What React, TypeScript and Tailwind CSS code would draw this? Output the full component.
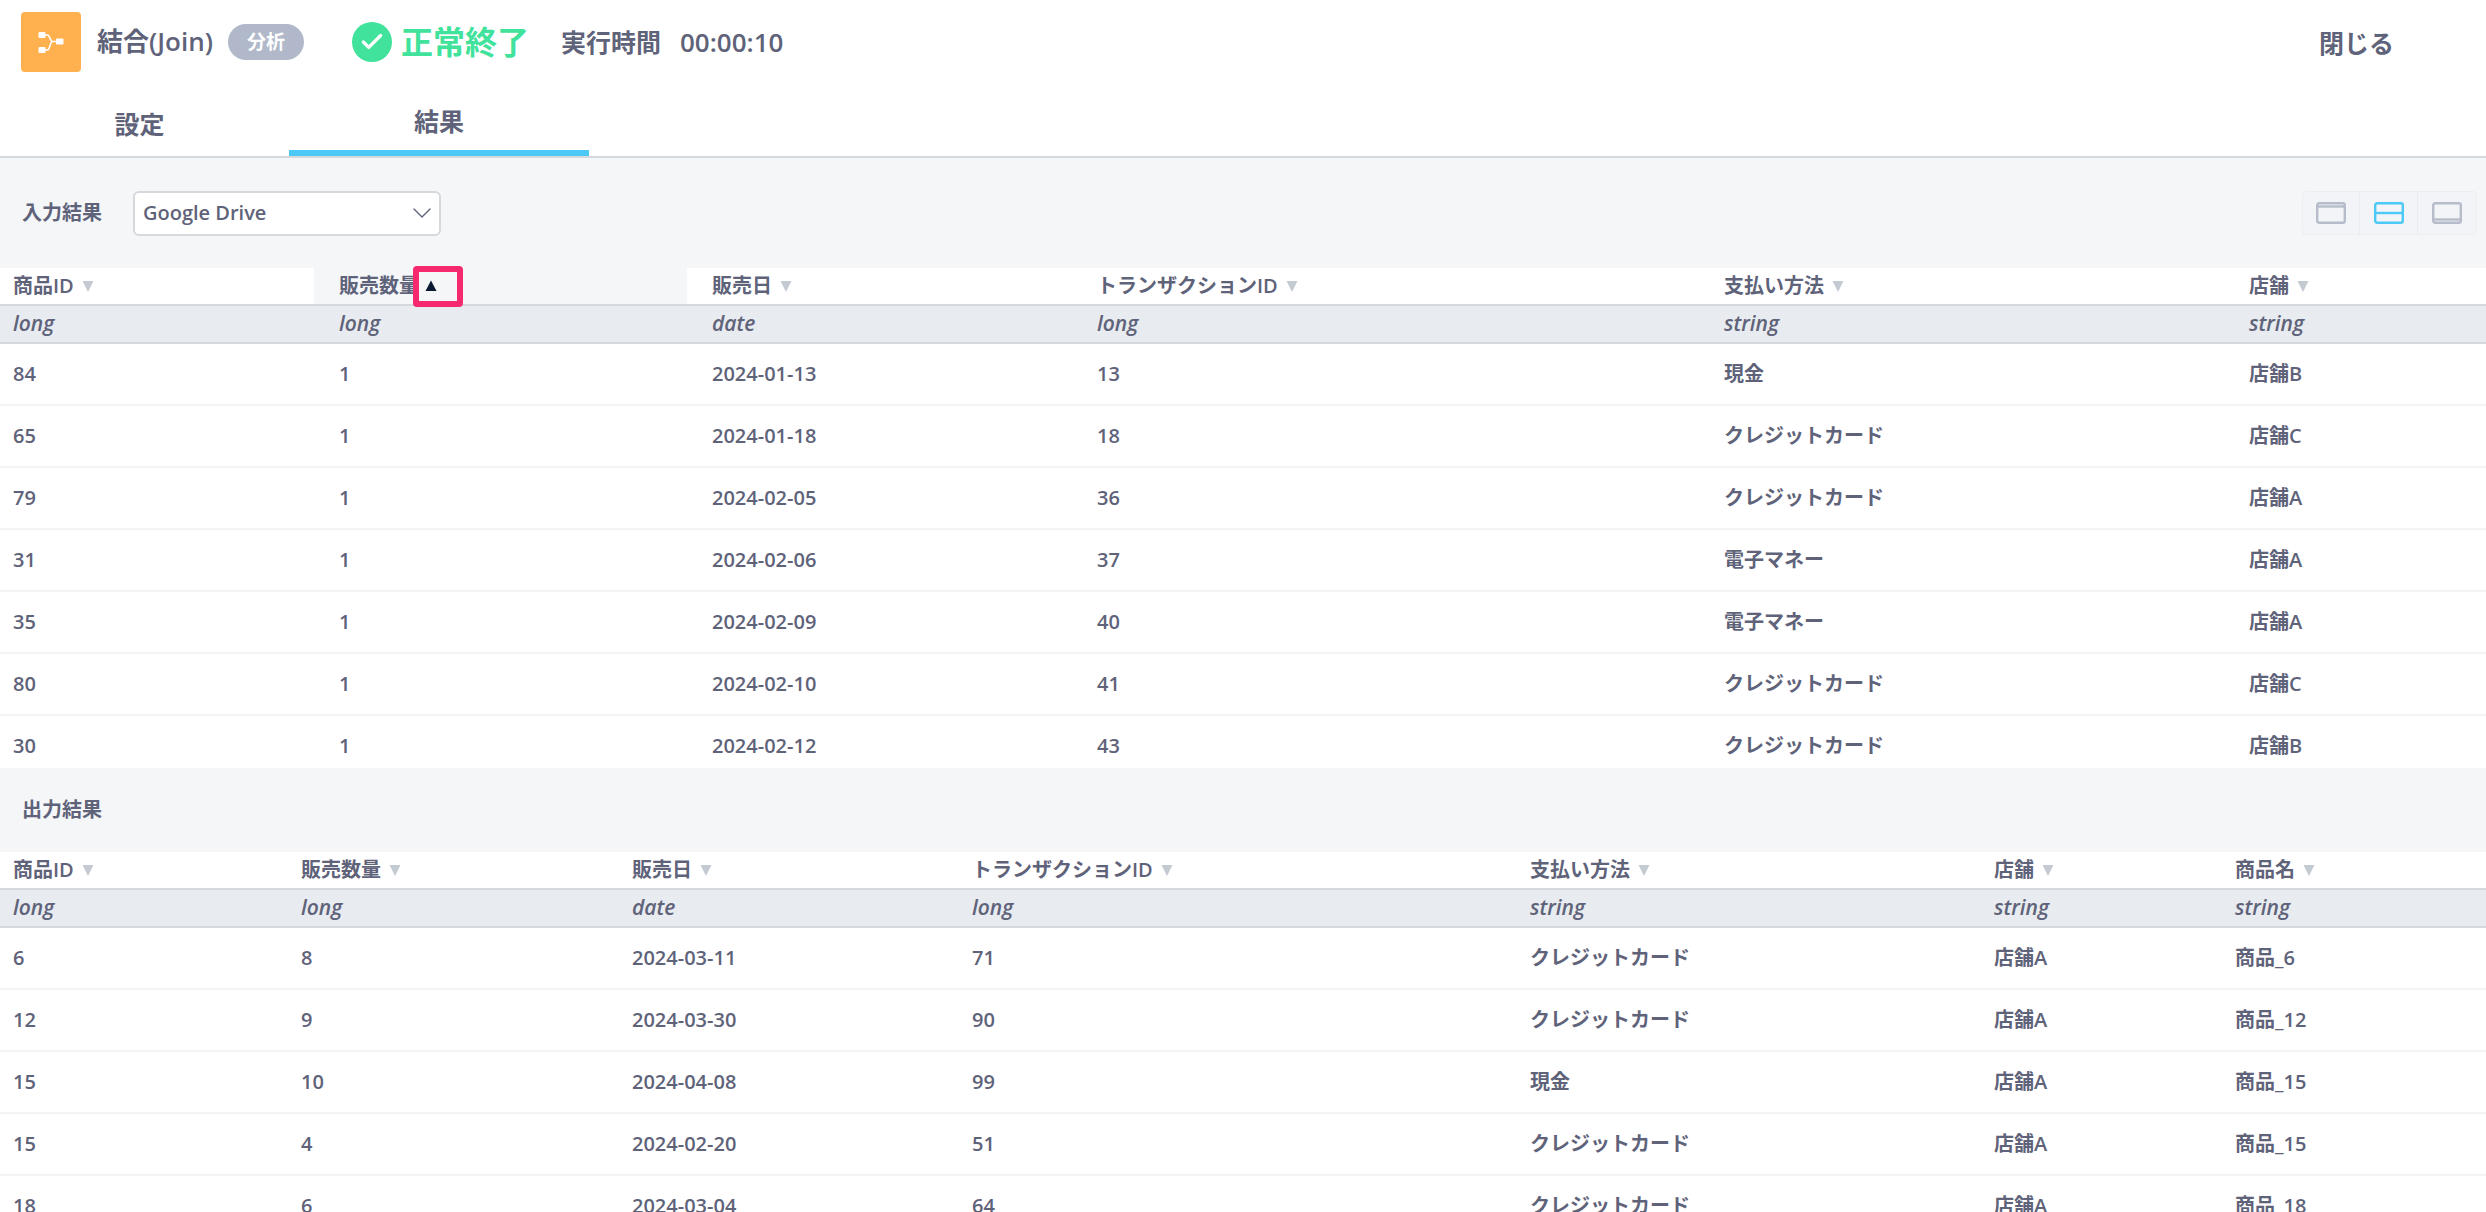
import { ChevronDown, Check } from 'lucide-react';

type Row = string[];

const inputCols = ['商品ID', '販売数量', '販売日', 'トランザクションID', '支払い方法', '店舗'];
const inputTypes = ['long', 'long', 'date', 'long', 'string', 'string'];
const inputRows: Row[] = [
  ['84', '1', '2024-01-13', '13', '現金', '店舗B'],
  ['65', '1', '2024-01-18', '18', 'クレジットカード', '店舗C'],
  ['79', '1', '2024-02-05', '36', 'クレジットカード', '店舗A'],
  ['31', '1', '2024-02-06', '37', '電子マネー', '店舗A'],
  ['35', '1', '2024-02-09', '40', '電子マネー', '店舗A'],
  ['80', '1', '2024-02-10', '41', 'クレジットカード', '店舗C'],
  ['30', '1', '2024-02-12', '43', 'クレジットカード', '店舗B'],
];

const outputCols = ['商品ID', '販売数量', '販売日', 'トランザクションID', '支払い方法', '店舗', '商品名'];
const outputTypes = ['long', 'long', 'date', 'long', 'string', 'string', 'string'];
const outputRows: Row[] = [
  ['6', '8', '2024-03-11', '71', 'クレジットカード', '店舗A', '商品_6'],
  ['12', '9', '2024-03-30', '90', 'クレジットカード', '店舗A', '商品_12'],
  ['15', '10', '2024-04-08', '99', '現金', '店舗A', '商品_15'],
  ['15', '4', '2024-02-20', '51', 'クレジットカード', '店舗A', '商品_15'],
  ['18', '6', '2024-03-04', '64', 'クレジットカード', '店舗A', '商品_18'],
];

const inputGrid = 'grid grid-cols-[314px_373px_385px_627px_525px_1fr]';
const outputGrid = 'grid grid-cols-[288px_331px_340px_558px_464px_241px_1fr]';

const SortMark = ({ active }: { active?: boolean }) => (
  <svg width="12" height="12" viewBox="0 0 12 12" className={active ? 'ml-[6px]' : 'ml-[8px]'}>
    {active ? <polygon points="6,0.500 11.500,11 0.500,11" fill="#0b1a33" /> : <polygon points="0.500,1 11.500,1 6,12" fill="#c3cad2" />}
  </svg>
);

const JoinIcon = () => (
  <svg width="60" height="60" viewBox="0 0 60 60" fill="none">
    <rect x="17.500" y="20" width="7" height="6" rx="1" fill="#fff" />
    <rect x="17.500" y="35" width="7" height="6" rx="1" fill="#fff" />
    <rect x="35" y="26.500" width="7.500" height="6" rx="1" fill="#fff" />
    <path d="M24 23h2.500c2.500 0 2.500 6.500 5 6.500H36M24 38h2.500c2.500 0 2.500-8.500 5-8.500" stroke="#fff" strokeWidth="1.600" />
  </svg>
);

const LayoutIcon = ({ kind }: { kind: 'top' | 'split' | 'bottom' }) => (
  <svg width="30" height="22" viewBox="0 0 30 22" fill="none" stroke={kind === 'split' ? '#4cc9f6' : '#b6bcca'} strokeWidth="2.400">
    <rect x="1.200" y="1.200" width="27.600" height="19.600" rx="2" />
    {kind === 'top' && <path d="M1 4.500h28" />}
    {kind === 'split' && <path d="M1 11h28" />}
    {kind === 'bottom' && <path d="M1 17.500h28" />}
  </svg>
);

const DataTable = ({ grid, cols, types, rows, sorted }: { grid: string; cols: string[]; types: string[]; rows: Row[]; sorted?: number }) => (
  <div>
    <div className={`${grid} h-[36px] border-b-2 border-[#d5d9de] bg-white box-content`}>
      {cols.map((c, i) => (
        <div key={c} className={`flex items-center font-semibold ${sorted === undefined ? 'pl-[13px]' : i === 0 ? 'pl-[13px]' : 'pl-[25px]'} ${sorted === i ? 'bg-[#f4f6f8]' : ''}`}>
          <span className="whitespace-nowrap">{c}</span>
          {sorted === i ? <SortMark active /> : <SortMark />}
        </div>
      ))}
    </div>
    <div className={`${grid} h-[36px] border-b-2 border-[#d5d9de] bg-[#e8ebef] box-content`}>
      {types.map((t, i) => (
        <div key={i} className={`flex items-center text-[21px] font-semibold italic ${sorted === undefined ? 'pl-[13px]' : i === 0 ? 'pl-[13px]' : 'pl-[25px]'}`}>
          <span>{t}</span>
        </div>
      ))}
    </div>
    {rows.map((r, ri) => (
      <div key={ri} className={`${grid} h-[62px] border-b-2 border-[#f3f4f6] bg-white`}>
        {r.map((v, i) => (
          <div key={i} className={`flex items-center font-semibold ${sorted === undefined ? 'pl-[13px]' : i === 0 ? 'pl-[13px]' : 'pl-[25px]'}`}>
            <span>{v}</span>
          </div>
        ))}
      </div>
    ))}
  </div>
);

export default function App() {
  return (
    <div className="relative h-[1212px] w-full overflow-hidden bg-white font-['Open_Sans','Noto_Sans_CJK_JP',sans-serif] text-[20px] text-[#5f637a]">
      {/* ヘッダー */}
      <div className="flex h-[84px] items-start pl-[21px] pr-[92px] pt-[12px]">
        <div className="h-[60px] w-[60px] rounded-[4px] bg-[#ffb04f]">
          <JoinIcon />
        </div>
        <div className="ml-[16px] mt-[11px] text-[26px] font-semibold leading-[36px]">結合(Join)</div>
        <div className="ml-[15px] mt-[12px] flex h-[36px] w-[76px] items-center justify-center rounded-full bg-[#b0b8c9] text-[19px] font-bold text-white">分析</div>
        <div className="ml-[48px] mt-[10px] flex h-[40px] w-[40px] items-center justify-center rounded-full bg-[#41e29b]">
          <Check size={26} strokeWidth={3} color="#fff" />
        </div>
        <div className="ml-[9px] mt-[9px] text-[32px] font-bold leading-[42px] text-[#41e29b]">正常終了</div>
        <div className="ml-[32px] mt-[12px] text-[25px] font-semibold leading-[36px]">実行時間</div>
        <div className="ml-[19px] mt-[12px] text-[26px] font-semibold leading-[36px]">00:00:10</div>
        <div className="ml-auto mt-[13px] text-[25px] font-semibold leading-[36px]">閉じる</div>
      </div>

      {/* タブ */}
      <div className="flex h-[72px] border-b-2 border-[#d5d9de] box-content">
        <div className="flex w-[279px] items-start justify-center pt-[22px] text-[25px] font-semibold leading-[36px]">設定</div>
        <div className="ml-[10px] flex w-[300px] items-start justify-center border-b-[6px] border-[#4cc9f6] pt-[19px] text-[25px] font-semibold leading-[36px]">結果</div>
      </div>

      <div className="bg-[#f4f6f8]">
        {/* 入力結果 */}
        <div className="flex h-[110px] items-center pl-[22px] pr-[9px]">
          <span className="text-[20px] font-semibold">入力結果</span>
          <div className="ml-[31px] flex h-[45px] w-[308px] items-center justify-between rounded-[6px] border-2 border-[#d5d9de] bg-white pl-[8px] pr-[1px] font-semibold">
            <span className="text-[20px]">Google Drive</span>
            <ChevronDown size={32} strokeWidth={1} />
          </div>
          <div className="ml-auto flex h-[44px] w-[175px] rounded-[4px] border border-[#eceef1] bg-[#f2f4f7]">
            <div className="flex w-[57px] items-center justify-center border-r border-[#e9ebef]"><LayoutIcon kind="top" /></div>
            <div className="flex w-[58px] items-center justify-center border-r border-[#e9ebef]"><LayoutIcon kind="split" /></div>
            <div className="flex flex-1 items-center justify-center"><LayoutIcon kind="bottom" /></div>
          </div>
        </div>

        <div className="h-[500px] overflow-hidden">
          <DataTable grid={inputGrid} cols={inputCols} types={inputTypes} rows={inputRows} sorted={1} />
        </div>

        {/* 出力結果 */}
        <div className="flex h-[84px] items-center pl-[22px] text-[20px] font-semibold">出力結果</div>
        <div className="h-[360px] overflow-hidden">
          <DataTable grid={outputGrid} cols={outputCols} types={outputTypes} rows={outputRows} />
        </div>
      </div>

      {/* ソート列の注記枠 */}
      <div className="absolute left-[413px] top-[266px] h-[41px] w-[50px] rounded-[4px] border-[6px] border-[#f6296f]" />
    </div>
  );
}
